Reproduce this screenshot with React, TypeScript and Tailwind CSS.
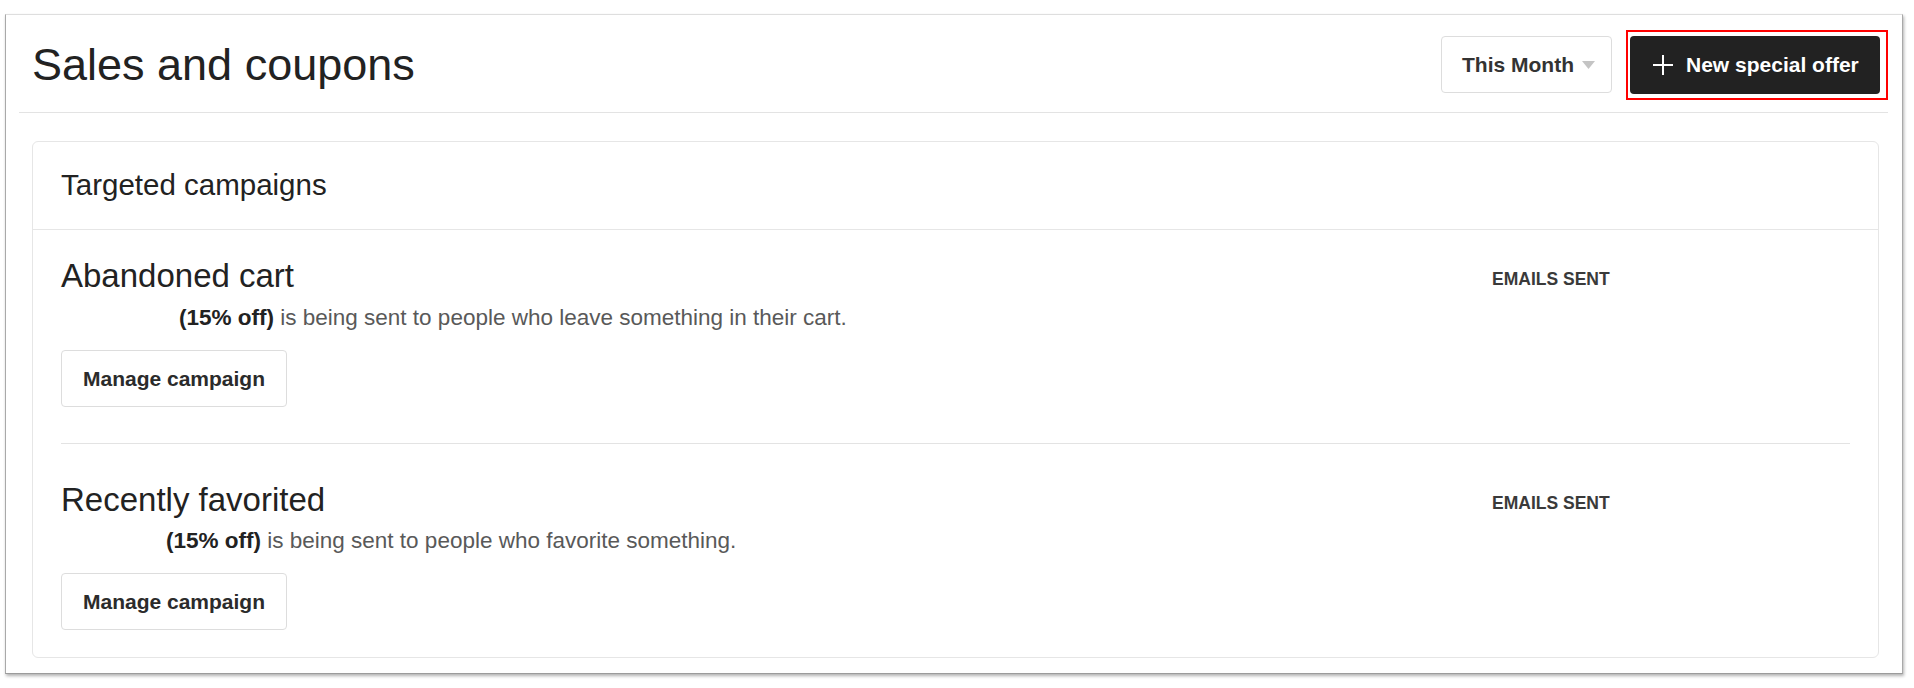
import React from "react";

function Caret() {
  return (
    <svg width="13" height="8" viewBox="0 0 13 8" className="shrink-0">
      <path d="M0 0 H13 L6.5 8 Z" fill="#c4c4c4" />
    </svg>
  );
}

function Plus() {
  return (
    <svg width="20" height="20" viewBox="0 0 20 20" className="shrink-0">
      <path d="M10 0 V20 M0 10 H20" stroke="#ffffff" strokeWidth="2" fill="none" />
    </svg>
  );
}

type Campaign = {
  title: string;
  text: string;
  indent: string;
  pt: string;
  titleGap: string;
  pb: string;
  last?: boolean;
};

function CampaignRow({ c }: { c: Campaign }) {
  return (
    <div className={`flex justify-between ${c.pt} ${c.pb} ${c.last ? "" : "border-b border-[#e3e3e3]"}`}>
      <div className="flex flex-col items-start">
        <h3 className="text-[33px] leading-[32px] text-[#222222] font-normal">{c.title}</h3>
        <p className={`${c.titleGap} ${c.indent} text-[22.5px] leading-[28px] text-[#595959]`}>
          <span className="font-bold text-[#222222]">(15% off)</span> {c.text}
        </p>
        <button className="mt-[18px] h-[57px] w-[226px] rounded-[4px] border border-[#dddddd] bg-white text-[21px] font-bold text-[#2b2b2b] flex items-center justify-center">
          Manage campaign
        </button>
      </div>
      <div className="w-[358px] mt-[8px]">
        <span className="text-[17.5px] leading-[17px] font-bold text-[#3a3a3a]">EMAILS SENT</span>
      </div>
    </div>
  );
}

export default function App() {
  const campaigns: Campaign[] = [
    {
      title: "Abandoned cart",
      text: "is being sent to people who leave something in their cart.",
      indent: "pl-[118px]",
      pt: "pt-[30px]",
      titleGap: "mt-[12px]",
      pb: "pb-[36px]",
    },
    {
      title: "Recently favorited",
      text: "is being sent to people who favorite something.",
      indent: "pl-[105px]",
      pt: "pt-[40px]",
      titleGap: "mt-[11px]",
      pb: "pb-[27px]",
      last: true,
    },
  ];

  return (
    <div className="w-[1914px] h-[688px] bg-white pt-[14px] pl-[5px] font-['Liberation_Sans',Arial,sans-serif]">
      <div className="w-[1898px] h-[660px] bg-white border border-[#dedede] border-l-[#a9a9a9] border-r-[#a9a9a9] border-b-[#9c9c9c] shadow-[1px_2px_3px_rgba(0,0,0,0.3)] pl-[13px] pr-[14px] flex flex-col">
        <div className="h-[98px] shrink-0 flex items-center justify-between border-b border-[#e3e3e3] pl-[13px] pt-[2px]">
          <h1 className="text-[45px] leading-[44px] text-[#222222] font-normal">Sales and coupons</h1>
          <div className="flex items-center gap-[14px]">
            <button className="h-[57px] w-[171px] rounded-[4px] border border-[#dddddd] bg-white pl-[20px] pr-[18px] flex items-center gap-[8px]">
              <span className="text-[21px] font-bold text-[#333333] whitespace-nowrap">This Month</span>
              <Caret />
            </button>
            <div className="border-2 border-[#ff0000] pl-[2px] pr-[6px] py-[4px]">
              <button className="h-[58px] w-[250px] rounded-[4px] bg-[#222222] pl-[23px] flex items-center gap-[13px]">
                <Plus />
                <span className="text-[21px] font-bold text-white whitespace-nowrap">New special offer</span>
              </button>
            </div>
          </div>
        </div>
        <div className="mt-[28px] ml-[13px] mr-[9px] rounded-[6px] border border-[#e6e6e6] bg-white">
          <div className="h-[88px] border-b border-[#e6e6e6] pl-[28px] pb-[3px] flex items-center">
            <h2 className="text-[29.5px] leading-[29px] text-[#222222] font-normal">Targeted campaigns</h2>
          </div>
          <div className="px-[28px]">
            {campaigns.map((c) => (
              <CampaignRow key={c.title} c={c} />
            ))}
          </div>
        </div>
      </div>
    </div>
  );
}
